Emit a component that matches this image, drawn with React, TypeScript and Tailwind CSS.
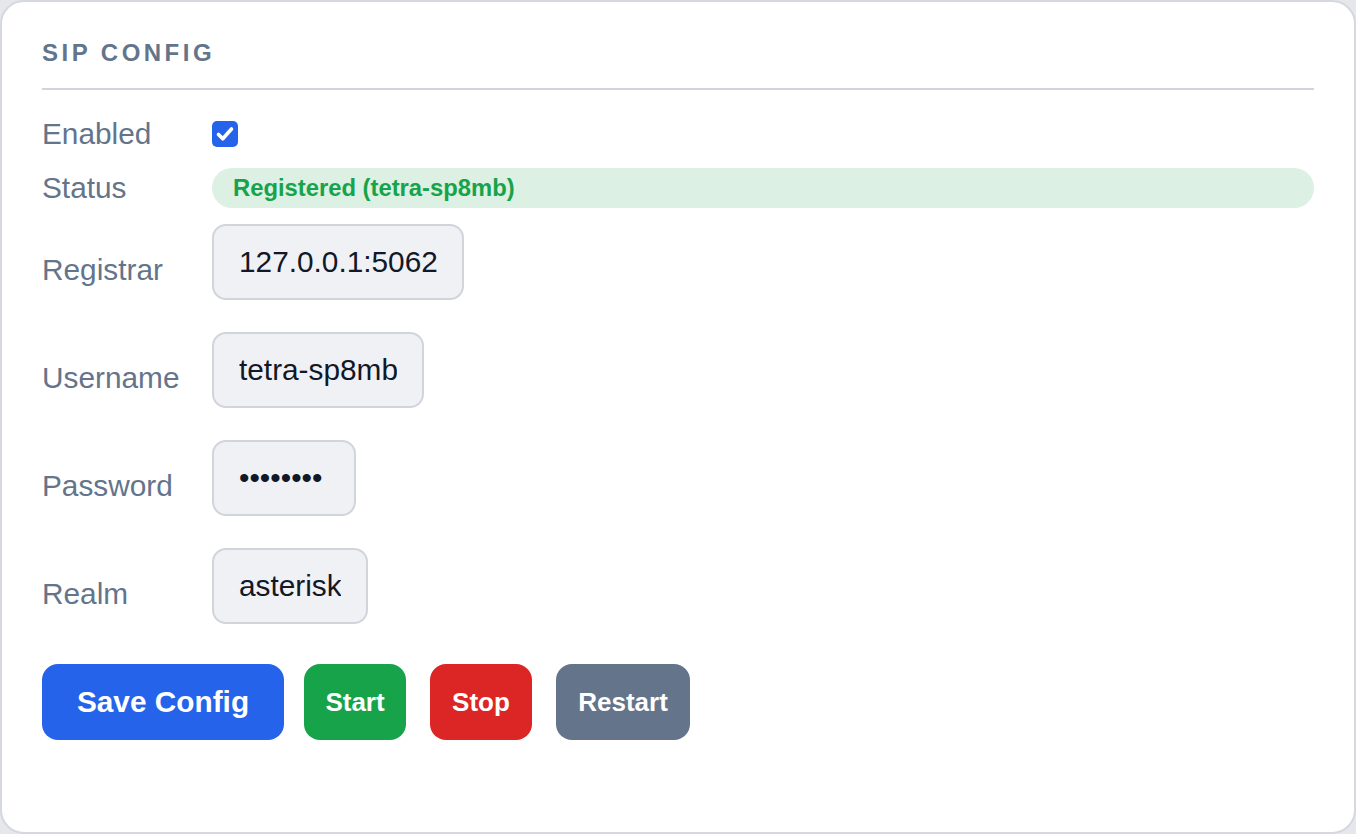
import React from "react"

const font = { fontFamily: '"Liberation Sans", Arial, sans-serif' }

function Field({ label, children }: { label: string; children: React.ReactNode }) {
  return (
    <div className="mt-4 flex items-center">
      <div className="w-[170px] text-[29.8px] text-[#64748b]">{label}</div>
      <div className="pb-4">{children}</div>
    </div>
  )
}

function TextInput({ value, width, type = "text" }: { value: string; width: string; type?: string }) {
  return (
    <input
      type={type}
      defaultValue={value}
      className={`h-[76px] ${width} rounded-[14px] border-2 border-[#d1d5db] bg-[#f0f1f5] px-[25px] text-[29.8px] text-[#111827] outline-none`}
      style={font}
    />
  )
}

export default function App() {
  return (
    <div className="min-h-screen bg-[#e5e7eb]" style={font}>
      <div className="h-[834px] rounded-[24px] border-2 border-[#d5d8e0] bg-white px-10 pt-[35px]">
        {/* Header */}
        <h2 className="border-b-2 border-[#d1d5db] pb-[19px] text-[24px] font-bold leading-[32px] tracking-[0.145em] text-[#64748b]">
          SIP CONFIG
        </h2>

        {/* Enabled */}
        <div className="mt-6 flex h-10 items-center">
          <div className="w-[170px] text-[29.8px] text-[#64748b]">Enabled</div>
          <div className="flex h-[26px] w-[26px] items-center justify-center rounded-[5px] bg-[#2563eb]">
            <svg width="20" height="20" viewBox="0 0 20 20" fill="none">
              <path d="M3.5 10.5l4.3 4.3L16.5 5" stroke="white" strokeWidth="3.6" strokeLinecap="round" strokeLinejoin="round" />
            </svg>
          </div>
        </div>

        {/* Status */}
        <div className="mt-[14px] flex h-10 items-center">
          <div className="w-[170px] text-[29.8px] text-[#64748b]">Status</div>
          <div className="flex h-10 flex-1 items-center rounded-full bg-[#dcf0e3] px-[21px] text-[23.8px] font-bold text-[#16a34a]">
            Registered (tetra-sp8mb)
          </div>
        </div>

        <Field label="Registrar">
          <TextInput value="127.0.0.1:5062" width="w-[252px]" />
        </Field>
        <Field label="Username">
          <TextInput value="tetra-sp8mb" width="w-[212px]" />
        </Field>
        <Field label="Password">
          <TextInput value="sipsecre" type="password" width="w-[144px]" />
        </Field>
        <Field label="Realm">
          <TextInput value="asterisk" width="w-[156px]" />
        </Field>

        {/* Actions */}
        <div className="mt-6 flex">
          <button className="h-[76px] w-[242px] rounded-[16px] bg-[#2563eb] text-[29.8px] font-bold text-white">
            Save Config
          </button>
          <button className="ml-5 h-[76px] w-[102px] rounded-[16px] bg-[#16a34a] text-[26px] font-bold text-white">
            Start
          </button>
          <button className="ml-6 h-[76px] w-[102px] rounded-[16px] bg-[#dc2626] text-[26px] font-bold text-white">
            Stop
          </button>
          <button className="ml-6 h-[76px] w-[134px] rounded-[16px] bg-[#64748b] text-[26px] font-bold text-white">
            Restart
          </button>
        </div>
      </div>
    </div>
  )
}
